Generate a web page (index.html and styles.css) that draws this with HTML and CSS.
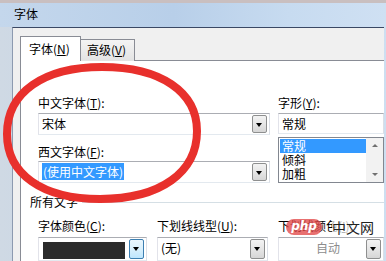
FILE: index.html
```html
<!DOCTYPE html>
<html lang="zh-CN">
<head>
  <meta charset="UTF-8">
  <title>字体</title>
  <link rel="stylesheet" href="styles.css">
</head>
<body>

  <!-- Font Dialog -->
  <div class="dialog">
    <div class="titlebar">字体</div>

    <div class="client">
      <div class="tabs">
        <div class="tab active">字体(<u>N</u>)</div>
        <div class="tab">高级(<u>V</u>)</div>
      </div>

      <div class="page">
        <div class="font-grid">
          <div class="col">
            <div class="label">中文字体(<u>T</u>):</div>
            <div class="combo">
              <span class="value">宋体</span>
              <span class="drop"></span>
            </div>
            <div class="label second">西文字体(<u>F</u>):</div>
            <div class="combo">
              <span class="value"><span class="selected">(使用中文字体)</span></span>
              <span class="drop"></span>
            </div>
          </div>

          <div class="col">
            <div class="label">字形(<u>Y</u>):</div>
            <div class="textbox">常规</div>
            <div class="listbox">
              <div class="items">
                <div class="item on">常规</div>
                <div class="item">倾斜</div>
                <div class="item">加粗</div>
              </div>
              <div class="scrollbar">
                <span class="arrow up"></span>
                <span class="arrow down"></span>
              </div>
            </div>
          </div>
        </div>

        <div class="group">
          <span class="group-title">所有文字</span>
          <span class="group-line"></span>
        </div>

        <div class="effects">
          <div class="field color">
            <div class="label">字体颜色(<u>C</u>):</div>
            <div class="combo">
              <span class="swatch"></span>
              <span class="drop hot"></span>
            </div>
          </div>
          <div class="field line">
            <div class="label">下划线线型(<u>U</u>):</div>
            <div class="combo">
              <span class="value">(无)</span>
              <span class="drop"></span>
            </div>
          </div>
          <div class="field linecolor">
            <div class="label">下划线颜色(<u>I</u>):</div>
            <div class="combo disabled">
              <span class="value center">自动</span>
              <span class="drop"></span>
            </div>
          </div>
        </div>
      </div>
    </div>
  </div>

  <!-- Red marker drawn on top of the screenshot -->
  <svg class="marker" width="386" height="261" viewBox="0 0 386 261">
    <path d="M7,134 C7,92 44,67 102,67 C161,67 197,92 197,131 C197,172 161,199 100,199 C42,199 7,174 7,134 Z"
          fill="none" stroke="#e8302c" stroke-width="8"/>
  </svg>

  <!-- Site watermark -->
  <div class="watermark">
    <span class="php">php</span>
    <span class="cn">中文网</span>
  </div>

</body>
</html>
```

FILE: styles.css
```css
/* Reset */
* { margin: 0; padding: 0; box-sizing: border-box; }
html, body {
  width: 386px;
  height: 261px;
  overflow: hidden;
}
body {
  position: relative;
  font-family: "Noto Sans CJK SC", "Noto Sans", sans-serif;
  font-size: 12px;
  color: #000;
  background: #d3dbe4;
}
u { text-decoration: underline; text-underline-offset: 1px; }

/* Window frame */
.dialog {
  display: flex;
  flex-direction: column;
  height: 261px;
  background: linear-gradient(90deg, #cfd9e4, #c4d6ea 40%, #cddff1);
}
.titlebar {
  height: 27px;
  padding-left: 14px;
  border-top: 3px solid #c9bfc0;
  line-height: 21px;
  background: linear-gradient(90deg, #c4d7ec, #b8cfe9 45%, #c7dbf0 75%, #cfe0f3);
}

/* Client area */
.client {
  flex: 1;
  width: 372px;
  margin-left: 12px;
  border-top: 1px solid #3a4864;
  border-left: 1px solid #8c9ab0;
  background: #f0f0f0;
  padding: 8px 0 0 7px;
  display: flex;
  flex-direction: column;
}

/* Tabs */
.tabs {
  display: flex;
  align-items: flex-end;
  height: 25px;
  margin-bottom: -1px;
  position: relative;
  z-index: 1;
}
.tab {
  height: 22px;
  width: 54px;
  line-height: 20px;
  padding-left: 6px;
  border: 1px solid #898c95;
  border-left: none;
  border-bottom: none;
  background: linear-gradient(#f4f4f4, #e3e3e3);
}
.tab.active {
  height: 25px;
  width: 61px;
  line-height: 24px;
  padding-left: 8px;
  border-left: 1px solid #898c95;
  background: #fff;
}

/* Tab page */
.page {
  flex: 1;
  background: #fff;
  border: 1px solid #898c95;
  border-right: none;
  border-bottom: none;
  padding: 35px 0 0 17px;
}
.label {
  height: 14px;
  line-height: 14px;
  margin-bottom: 3px;
  white-space: nowrap;
}
.font-grid {
  display: grid;
  grid-template-columns: 232px 106px;
  column-gap: 8px;
}
.label.second { margin-top: 10px; margin-bottom: 2px; }

/* Combo boxes */
.combo {
  display: flex;
  align-items: stretch;
  height: 22px;
  padding: 1px 2px 1px 1px;
  border: 1px solid #abadb3;
  border-color: #abadb3 #dbdfe6 #e3e9ef #e2e3ea;
  background: #fff;
}
.combo .value {
  flex: 1;
  line-height: 18px;
  padding-left: 2px;
  white-space: nowrap;
}
.combo .value.center { text-align: center; padding-left: 10px; color: #8d8d8d; }
.selected { background: #3399ff; color: #fff; padding: 0 1px; }
.drop {
  position: relative;
  width: 15px;
  border: 1px solid #8e8f8f;
  border-radius: 2px;
  background: linear-gradient(#f3f3f3, #e6e6e6 50%, #d6d6d6);
}
.drop::after {
  content: "";
  position: absolute;
  left: 3px;
  top: 7px;
  border-left: 3.5px solid transparent;
  border-right: 3.5px solid transparent;
  border-top: 4px solid #000;
}
.drop.hot {
  border-color: #3c7fb1;
  background: linear-gradient(#eaf6fd, #d9f0fc 50%, #bee6fd);
}

/* Style box */
.textbox {
  height: 21px;
  line-height: 19px;
  padding-left: 3px;
  border: 1px solid #abadb3;
  border-color: #abadb3 #dbdfe6 #e3e9ef #e2e3ea;
}
.listbox {
  display: flex;
  height: 46px;
  margin-top: 3px;
  border: 1px solid #828790;
  padding: 1px;
}
.items { flex: 1; }
.item {
  height: 14px;
  line-height: 14px;
  padding-left: 2px;
}
.item.on { background: #3399ff; color: #fff; }
.scrollbar {
  width: 17px;
  margin: -1px -1px -1px 0;
  background: #f2f2f2;
  display: flex;
  flex-direction: column;
  justify-content: space-between;
  align-items: center;
  padding: 6px 0;
}
.arrow {
  width: 0;
  height: 0;
  border-left: 3px solid transparent;
  border-right: 3px solid transparent;
}
.arrow.up { border-bottom: 3px solid #707070; }
.arrow.down { border-top: 3px solid #707070; }

/* All text group */
.group {
  display: flex;
  align-items: center;
  height: 14px;
  margin: 12px 0 0 -8px;
}
.group-title { line-height: 14px; padding-right: 4px; }
.group-line { flex: 1; border-top: 1px solid #d5dfe5; }

.effects {
  display: flex;
  margin-top: 10px;
}
.effects .label { margin-bottom: 4px; }
.field.color { width: 109px; }
.field.line { width: 111px; margin-left: 10px; }
.field.linecolor { width: 106px; margin-left: 10px; }
.field .combo { height: 24px; }
.swatch {
  flex: 1;
  margin: 3px 4px 0 3px;
  background: #2b2b2b;
}

/* Overlays */
.marker {
  position: absolute;
  left: 0;
  top: 0;
  pointer-events: none;
}
.watermark {
  position: absolute;
  left: 286px;
  top: 219px;
  display: flex;
  align-items: center;
}
.php {
  width: 36px;
  height: 16px;
  border-radius: 8px;
  background: rgba(226, 72, 72, 0.78);
  color: #fff;
  font-family: "DejaVu Sans", sans-serif;
  font-style: italic;
  font-weight: bold;
  font-size: 12px;
  line-height: 15px;
  text-align: center;
}
.cn {
  margin-left: 10px;
  font-size: 14px;
  line-height: 16px;
  color: #222;
  background: rgba(255, 255, 255, 0.7);
}
```
